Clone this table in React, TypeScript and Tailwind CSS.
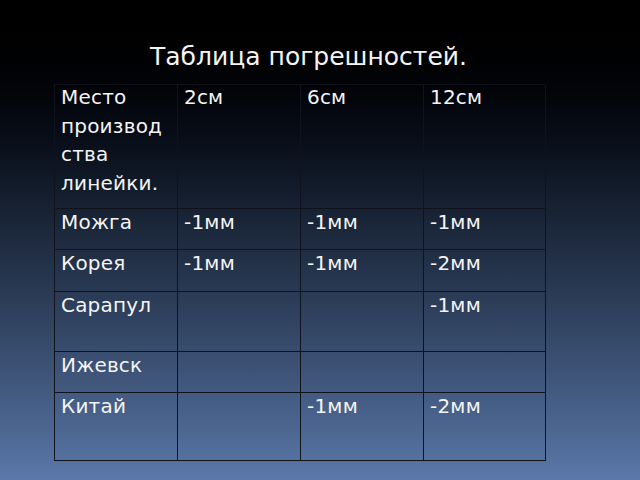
import React from "react";

const rows: string[][] = [
  ["Можга", "-1мм", "-1мм", "-1мм"],
  ["Корея", "-1мм", "-1мм", "-2мм"],
  ["Сарапул", "", "", "-1мм"],
  ["Ижевск", "", "", ""],
  ["Китай", "", "-1мм", "-2мм"],
];

const cell = "border-r-[1.5px] border-b-[1.5px] border-[#10131c] pl-[6px] overflow-hidden";

export default function App() {
  return (
    <div
      className="w-[640px] h-[480px] bg-gradient-to-b from-black to-[#5a78a9] text-[#f4f4f4] overflow-hidden"
      style={{ fontFamily: '"DejaVu Sans", sans-serif' }}
    >
      <div className="h-[84px] pt-[42px] pr-[23px] text-center text-[25px] leading-[29px]">
        Таблица погрешностей.
      </div>
      <div className="pl-[54px]">
        <div className="grid grid-cols-[123px_123px_123px_122px] grid-rows-[124px_41px_42px_60px_41px_68px] w-[491px] border-l-[1.5px] border-t-[1.5px] border-[#10131c] text-[20px] leading-[28.5px] tracking-[0.2px]">
          <div className={cell}>
            <div className="-mt-[2px]">
              Место
              <br />
              производ
              <br />
              ства
              <br />
              линейки.
            </div>
          </div>
          <div className={cell}>
            <div className="-mt-[2px]">2см</div>
          </div>
          <div className={cell}>
            <div className="-mt-[2px]">6см</div>
          </div>
          <div className={cell}>
            <div className="-mt-[2px]">12см</div>
          </div>
          {rows.map((r, i) =>
            r.map((t, j) => (
              <div key={`${i}-${j}`} className={cell}>
                <div className="-mt-[1px]">{t}</div>
              </div>
            ))
          )}
        </div>
      </div>
    </div>
  );
}
